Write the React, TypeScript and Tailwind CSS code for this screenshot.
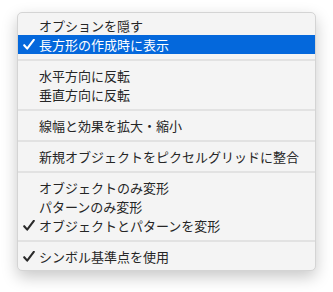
import React from "react";

type Item = { label: string; checked?: boolean; active?: boolean } | "sep";

const items: Item[] = [
  { label: "オプションを隠す" },
  { label: "長方形の作成時に表示", checked: true, active: true },
  "sep",
  { label: "水平方向に反転" },
  { label: "垂直方向に反転" },
  "sep",
  { label: "線幅と効果を拡大・縮小" },
  "sep",
  { label: "新規オブジェクトをピクセルグリッドに整合" },
  "sep",
  { label: "オブジェクトのみ変形" },
  { label: "パターンのみ変形" },
  { label: "オブジェクトとパターンを変形", checked: true },
  "sep",
  { label: "シンボル基準点を使用", checked: true },
];

function Check({ color }: { color: string }) {
  return (
    <svg width="12" height="11" viewBox="0 0 12 11" className="block">
      <path
        d="M1.2 6.2 L4.2 9.6 L10.8 0.8"
        fill="none"
        stroke={color}
        strokeWidth="2.1"
        strokeLinecap="round"
        strokeLinejoin="round"
      />
    </svg>
  );
}

export default function App() {
  return (
    <div
      className="w-[333px] h-[292px] bg-white pt-[12px] pl-[17px]"
      style={{ fontFamily: '"Noto Sans CJK JP", "Noto Sans", sans-serif' }}
    >
      <div className="w-[299px] h-[259px] rounded-[5px] bg-[#f4f4f4] border border-[#d4d4d4] shadow-[0_6px_16px_rgba(0,0,0,0.22)] py-[3px] overflow-hidden">
        {items.map((it, i) =>
          it === "sep" ? (
            <div key={i} className="h-[12px] flex items-center">
              <div className="h-[2px] w-full bg-[#e2e2e2]" />
            </div>
          ) : (
            <div
              key={i}
              className={
                "h-[19px] flex items-center text-[13px] leading-[19px] " +
                (it.active ? "bg-[#0468dc] text-white" : "text-[#262626]")
              }
            >
              <div className="w-[21px] pl-[5px] flex items-center">
                {it.checked ? <Check color={it.active ? "#ffffff" : "#2a2a2a"} /> : null}
              </div>
              <span>{it.label}</span>
            </div>
          )
        )}
      </div>
    </div>
  );
}
